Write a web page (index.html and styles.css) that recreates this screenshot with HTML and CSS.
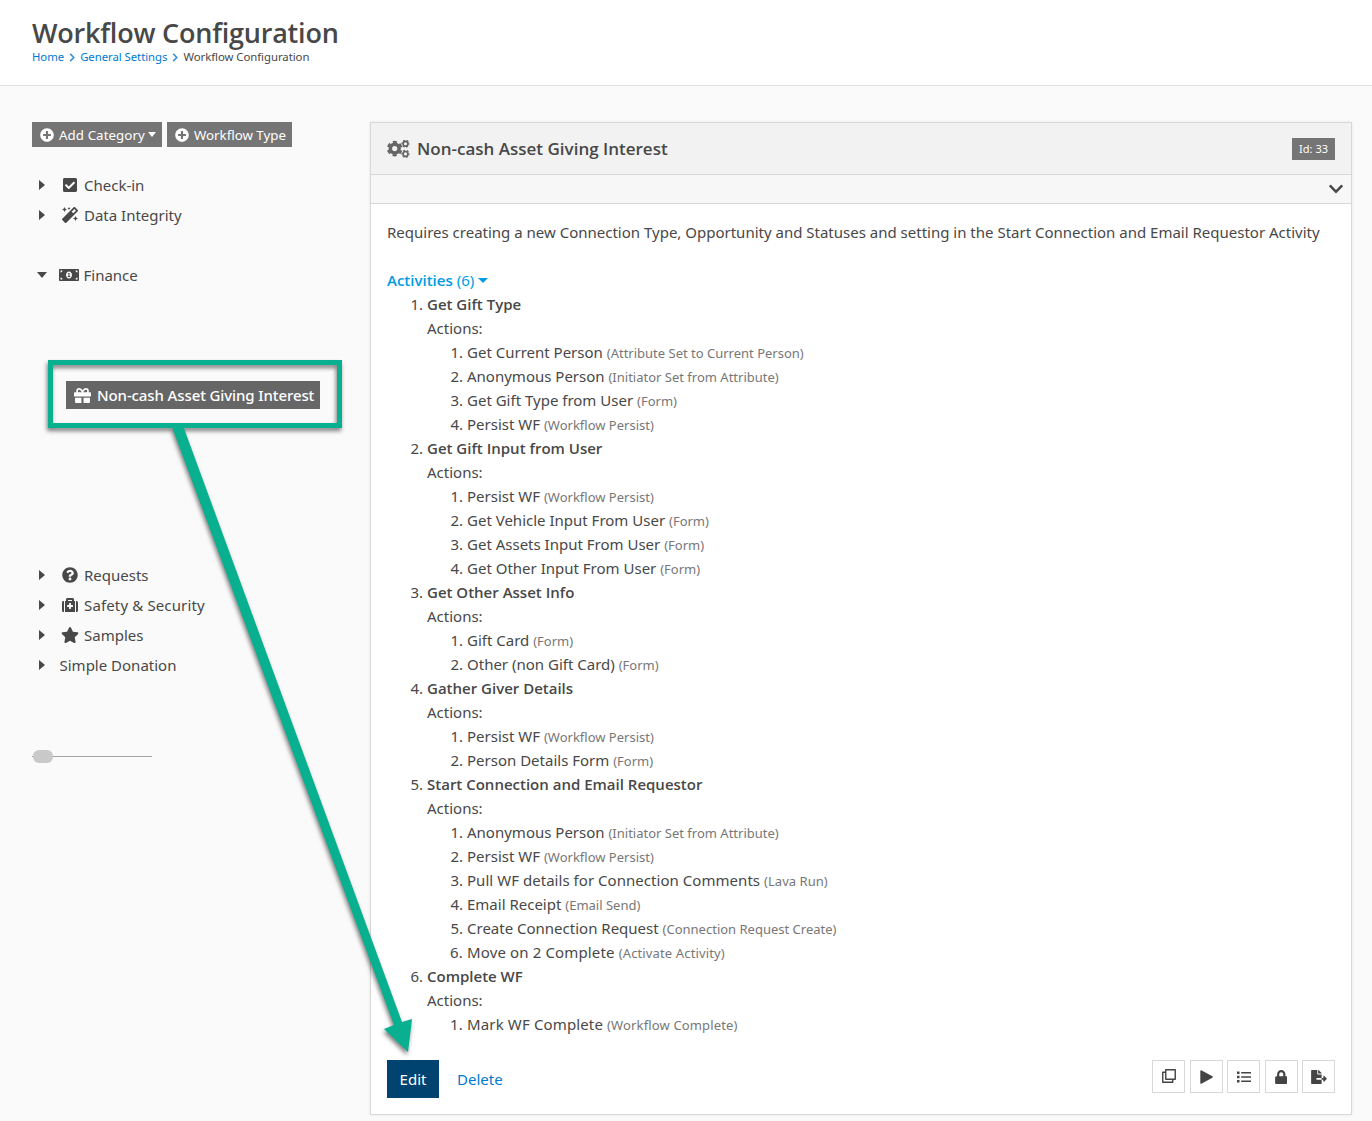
FILE: index.html
```html
<!DOCTYPE html>
<html lang="en">
<head>
<meta charset="utf-8">
<title>Workflow Configuration</title>
<link rel="stylesheet" href="styles.css">
</head>
<body>
<header class="page-header">
  <h1>Workflow Configuration</h1>
  <nav class="breadcrumb">
    <a href="#">Home</a>
    <svg class="sep" viewBox="0 0 6 10"><path d="M1 1l4 4-4 4"/></svg>
    <a href="#">General Settings</a>
    <svg class="sep" viewBox="0 0 6 10"><path d="M1 1l4 4-4 4"/></svg>
    <span>Workflow Configuration</span>
  </nav>
</header>

<main class="content">
  <aside class="sidebar">
    <div class="toolbar">
      <button class="btn-tool"><svg class="icon-plus" viewBox="0 0 512 512"><path d="M256 8C119 8 8 119 8 256s111 248 248 248 248-111 248-248S393 8 256 8zm144 276c0 6.600-5.400 12-12 12h-92v92c0 6.600-5.400 12-12 12h-56c-6.600 0-12-5.400-12-12v-92h-92c-6.600 0-12-5.400-12-12v-56c0-6.600 5.400-12 12-12h92v-92c0-6.600 5.400-12 12-12h56c6.600 0 12 5.400 12 12v92h92c6.600 0 12 5.400 12 12v56z"/></svg><span class="cat">Add Category</span><i class="caret"></i></button>
      <button class="btn-tool"><svg class="icon-plus" viewBox="0 0 512 512"><path d="M256 8C119 8 8 119 8 256s111 248 248 248 248-111 248-248S393 8 256 8zm144 276c0 6.600-5.400 12-12 12h-92v92c0 6.600-5.400 12-12 12h-56c-6.600 0-12-5.400-12-12v-92h-92c-6.600 0-12-5.400-12-12v-56c0-6.600 5.400-12 12-12h92v-92c0-6.600 5.400-12 12-12h56c6.600 0 12 5.400 12 12v92h92c6.600 0 12 5.400 12 12v56z"/></svg><span>Workflow Type</span></button>
    </div>

    <ul class="tree">
      <li><i class="arrow"></i><span class="ico"><svg width="14" height="16" viewBox="0 0 448 512"><path d="M400 480H48c-26.510 0-48-21.490-48-48V80c0-26.510 21.490-48 48-48h352c26.510 0 48 21.490 48 48v352c0 26.510-21.490 48-48 48zm-204.686-98.059l184-184c6.248-6.248 6.248-16.379 0-22.627l-22.627-22.627c-6.248-6.248-16.379-6.249-22.628 0L184 302.745l-70.059-70.059c-6.248-6.248-16.379-6.248-22.628 0l-22.627 22.627c-6.248 6.248-6.248 16.379 0 22.627l104 104c6.249 6.250 16.379 6.250 22.628.001z"/></svg></span>Check-in</li>
      <li><i class="arrow"></i><span class="ico"><svg width="16" height="16" viewBox="0 0 512 512"><path d="M224 96l16-32 32-16-32-16-16-32-16 32-32 16 32 16 16 32zM80 160l26.660-53.330L160 80l-53.340-26.670L80 0 53.340 53.330 0 80l53.340 26.670L80 160zm352 128l-26.660 53.330L352 368l53.340 26.670L432 448l26.660-53.330L512 368l-53.340-26.670L432 288zm70.620-193.770L417.770 9.380C411.530 3.120 403.340 0 395.150 0c-8.190 0-16.380 3.120-22.630 9.380L9.380 372.520c-12.500 12.500-12.500 32.760 0 45.250l84.850 84.850c6.250 6.250 14.440 9.370 22.620 9.370 8.190 0 16.380-3.120 22.630-9.370l363.140-363.150c12.500-12.480 12.500-32.750 0-45.240zM359.450 203.460l-50.910-50.910 86.600-86.600 50.910 50.910-86.600 86.600z"/></svg></span>Data Integrity</li>
      <li class="open"><i class="arrow down"></i><span class="ico"><svg width="20" height="16" viewBox="0 0 640 512"><path d="M352 288h-16v-88c0-4.420-3.580-8-8-8h-13.580c-4.740 0-9.370 1.400-13.310 4.030l-15.330 10.220a7.994 7.994 0 0 0-2.220 11.090l8.880 13.310a7.994 7.994 0 0 0 11.090 2.220l.47-.31V288h-16c-4.420 0-8 3.580-8 8v16c0 4.420 3.580 8 8 8h64c4.420 0 8-3.580 8-8v-16c0-4.420-3.580-8-8-8zM608 64H32C14.330 64 0 78.330 0 96v320c0 17.670 14.330 32 32 32h576c17.670 0 32-14.330 32-32V96c0-17.670-14.330-32-32-32zM48 400v-64c35.350 0 64 28.650 64 64H48zm0-224v-64h64c0 35.350-28.650 64-64 64zm272 192c-53.020 0-96-50.150-96-112 0-61.860 42.980-112 96-112s96 50.130 96 112c0 61.870-43 112-96 112zm272 32h-64c0-35.350 28.650-64 64-64v64zm0-224c-35.350 0-64-28.650-64-64h64v64z"/></svg></span>Finance
      </li>
      <li class="selected-row"><span class="selected"><svg width="17" height="17" viewBox="0 0 512 512"><path d="M32 448c0 17.700 14.300 32 32 32h160V320H32v128zm256 32h160c17.700 0 32-14.300 32-32V320H288v160zm192-320h-42.100c6.200-12.100 10.100-25.500 10.100-40 0-48.500-39.500-88-88-88-41.600 0-68.500 21.300-103 68.300-34.500-47-61.400-68.300-103-68.300-48.500 0-88 39.500-88 88 0 14.500 3.800 27.900 10.100 40H32c-17.700 0-32 14.300-32 32v80c0 8.800 7.200 16 16 16h480c8.800 0 16-7.200 16-16v-80c0-17.700-14.300-32-32-32zm-326.100 0c-22.100 0-40-17.900-40-40s17.900-40 40-40c19.900 0 34.600 3.300 86.100 80h-86.100zm206.100 0h-86.100c51.400-76.500 65.700-80 86.100-80 22.100 0 40 17.900 40 40s-17.900 40-40 40z"/></svg>Non-cash Asset Giving Interest</span></li>
      <li><i class="arrow"></i><span class="ico"><svg width="16" height="16" viewBox="0 0 512 512"><path d="M504 256c0 136.997-111.043 248-248 248S8 392.997 8 256C8 119.083 119.043 8 256 8s248 111.083 248 248zM262.655 90c-54.497 0-89.255 22.957-116.549 63.758-3.536 5.286-2.353 12.415 2.715 16.258l34.699 26.310c5.205 3.947 12.621 3.008 16.665-2.122 17.864-22.658 30.113-35.797 57.303-35.797 20.429 0 45.698 13.148 45.698 32.958 0 14.976-12.363 22.667-32.534 33.976C247.128 238.528 216 254.941 216 296v4c0 6.627 5.373 12 12 12h56c6.627 0 12-5.373 12-12v-1.333c0-28.462 83.186-29.647 83.186-106.667 0-58.002-60.165-102-116.531-102zM256 338c-25.365 0-46 20.635-46 46 0 25.364 20.635 46 46 46s46-20.636 46-46c0-25.365-20.635-46-46-46z"/></svg></span>Requests</li>
      <li class="wide"><i class="arrow"></i><span class="ico"><svg width="16" height="16" viewBox="0 0 512 512"><path d="M96 480h320V128h-32V80c0-26.510-21.490-48-48-48H176c-26.510 0-48 21.490-48 48v48H96v352zm96-384h128v32H192V96zm320 80v256c0 26.510-21.490 48-48 48h-16V128h16c26.510 0 48 21.490 48 48zM64 480H48c-26.510 0-48-21.490-48-48V176c0-26.510 21.490-48 48-48h16v352zm288-208v32c0 8.837-7.163 16-16 16h-48v48c0 8.837-7.163 16-16 16h-32c-8.837 0-16-7.163-16-16v-48h-48c-8.837 0-16-7.163-16-16v-32c0-8.837 7.163-16 16-16h48v-48c0-8.837 7.163-16 16-16h32c8.837 0 16 7.163 16 16v48h48c8.837 0 16 7.163 16 16z"/></svg></span>Safety &amp; Security</li>
      <li><i class="arrow"></i><span class="ico"><svg width="18" height="16" viewBox="0 0 576 512"><path d="M259.300 17.800L194 150.200 47.900 171.500c-26.200 3.800-36.700 36.100-17.700 54.600l105.700 103-25 145.500c-4.500 26.300 23.200 46 46.400 33.700L288 439.600l130.700 68.700c23.200 12.200 50.900-7.400 46.400-33.700l-25-145.500 105.700-103c19-18.500 8.500-50.800-17.700-54.600L382 150.200 316.700 17.800c-11.700-23.600-45.600-23.900-57.400 0z"/></svg></span>Samples</li>
      <li><i class="arrow"></i>Simple Donation</li>
    </ul>

    <div class="slider"><span class="thumb"></span></div>
  </aside>

  <section class="panel">
    <div class="panel-heading">
      <svg class="cogs" width="23" height="18" viewBox="0 0 23 18">
        <circle cx="7.700" cy="8.600" r="4.400" stroke-width="3.600"/>
        <circle cx="7.700" cy="8.600" r="6.700" stroke-width="2.200" stroke-dasharray="4 3.016" stroke-dashoffset="2" transform="rotate(30 7.700 8.600)"/>
        <circle cx="18.500" cy="3.700" r="2.400" stroke-width="1.700"/>
        <circle cx="18.500" cy="3.700" r="3.500" stroke-width="1.200" stroke-dasharray="1.960 1.705" stroke-dashoffset=".98"/>
        <circle cx="18.500" cy="13.900" r="2.400" stroke-width="1.700"/>
        <circle cx="18.500" cy="13.900" r="3.500" stroke-width="1.200" stroke-dasharray="1.960 1.705" stroke-dashoffset=".98"/>
      </svg>
      <h2>Non-cash Asset Giving Interest</h2>
      <span class="label">Id: 33</span>
    </div>
    <div class="panel-drawer"><svg width="14" height="16" viewBox="0 0 448 512"><path d="M207.029 381.476L12.686 187.132c-9.373-9.373-9.373-24.569 0-33.941l22.667-22.667c9.357-9.357 24.522-9.375 33.901-.04L224 284.505l154.745-154.021c9.379-9.335 24.544-9.317 33.901.04l22.667 22.667c9.373 9.373 9.373 24.569 0 33.941L240.971 381.476c-9.373 9.372-24.569 9.372-33.942 0z"/></svg></div>
    <div class="panel-body">
      <p class="description">Requires creating a new Connection Type, Opportunity and Statuses and setting in the Start Connection and Email Requestor Activity</p>
      <div class="activities-title"><strong>Activities</strong> (6)<i class="caret"></i></div>
      <ol class="activities">
        <li><strong>Get Gift Type</strong><div>Actions:</div>
          <ol>
            <li>Get Current Person <small>(Attribute Set to Current Person)</small></li>
            <li>Anonymous Person <small>(Initiator Set from Attribute)</small></li>
            <li>Get Gift Type from User <small>(Form)</small></li>
            <li>Persist WF <small>(Workflow Persist)</small></li>
          </ol></li>
        <li><strong>Get Gift Input from User</strong><div>Actions:</div>
          <ol>
            <li>Persist WF <small>(Workflow Persist)</small></li>
            <li>Get Vehicle Input From User <small>(Form)</small></li>
            <li>Get Assets Input From User <small>(Form)</small></li>
            <li>Get Other Input From User <small>(Form)</small></li>
          </ol></li>
        <li><strong>Get Other Asset Info</strong><div>Actions:</div>
          <ol>
            <li>Gift Card <small>(Form)</small></li>
            <li>Other (non Gift Card) <small>(Form)</small></li>
          </ol></li>
        <li><strong>Gather Giver Details</strong><div>Actions:</div>
          <ol>
            <li>Persist WF <small>(Workflow Persist)</small></li>
            <li>Person Details Form <small>(Form)</small></li>
          </ol></li>
        <li><strong>Start Connection and Email Requestor</strong><div>Actions:</div>
          <ol>
            <li>Anonymous Person <small>(Initiator Set from Attribute)</small></li>
            <li>Persist WF <small>(Workflow Persist)</small></li>
            <li class="roomy">Pull WF details for Connection Comments <small>(Lava Run)</small></li>
            <li>Email Receipt <small>(Email Send)</small></li>
            <li>Create Connection Request <small>(Connection Request Create)</small></li>
            <li class="roomier">Move on 2 Complete <small>(Activate Activity)</small></li>
          </ol></li>
        <li><strong>Complete WF</strong><div>Actions:</div>
          <ol>
            <li class="roomier">Mark WF Complete <small>(Workflow Complete)</small></li>
          </ol></li>
      </ol>
      <div class="actions">
        <button class="btn-primary">Edit</button>
        <a class="btn-link" href="#">Delete</a>
        <div class="icon-buttons">
          <button><svg class="clone" width="14" height="14" viewBox="0 0 14 14"><path class="line" d="M3.750.75h9.500v9.500h-9.500zM3.500 3.250H.75v10h10V10.500"/></svg></button>
          <button><svg width="13" height="14" viewBox="0 0 13 14"><path d="M.3 1.100C.3.200 1 0 1.700.4l10.700 5.900c.6.400.6 1 0 1.400L1.700 13.600c-.7.400-1.400.2-1.400-.7z"/></svg></button>
          <button><svg width="14" height="12" viewBox="0 0 14 12"><path d="M0 .5h2.500V3H0zM0 4.700h2.500v2.500H0zM0 9h2.500v2.500H0zM4.200 1h9.800v1.500H4.200zM4.200 5.200h9.800v1.500H4.200zM4.200 9.500h9.800V11H4.200z"/></svg></button>
          <button><svg width="12.500" height="14" viewBox="0 0 448 512"><path d="M400 224h-24v-72C376 68.200 307.800 0 224 0S72 68.200 72 152v72H48c-26.500 0-48 21.500-48 48v192c0 26.500 21.500 48 48 48h352c26.500 0 48-21.500 48-48V272c0-26.500-21.500-48-48-48zm-104 0H152v-72c0-39.700 32.300-72 72-72s72 32.300 72 72v72z"/></svg></button>
          <button><svg width="16" height="14" viewBox="0 0 576 512"><path d="M384 121.900c0-6.300-2.500-12.400-7-16.900L279.100 7c-4.500-4.500-10.600-7-17-7H256v128h128zM571 308l-95.700-96.400c-10.100-10.100-27.400-3-27.400 11.300V288h-64v64h64v65.200c0 14.300 17.300 21.400 27.400 11.300L571 332c6.600-6.600 6.600-17.400 0-24zm-379 28v-32c0-8.800 7.200-16 16-16h176V160H248c-13.200 0-24-10.800-24-24V0H24C10.700 0 0 10.700 0 24v464c0 13.300 10.700 24 24 24h336c13.300 0 24-10.700 24-24V352H208c-8.800 0-16-7.200-16-16z"/></svg></button>
        </div>
      </div>
    </div>
  </section>
</main>

<svg class="callout" width="1372" height="1121" viewBox="0 0 1372 1121">
  <rect x="50.500" y="362.500" width="289" height="63"/>
  <path d="M172 427h11.500L402 1022l10-3-4 33-24-23 10-4z"/>
</svg>
</body>
</html>
```
FILE: styles.css
```css
* { box-sizing: border-box; }

body {
  margin: 0;
  min-height: 1121px;
  position: relative;
  background: #fafafa;
  color: #484848;
  font: 15px/24px "Noto Sans", "Open Sans", sans-serif;
}

a { color: #0079d0; text-decoration: none; }
svg { fill: currentColor; display: block; flex: none; }
button { font: inherit; margin: 0; border: 0; border-radius: 0; }
strong, h1, h2 { font-family: "Open Sans", "Noto Sans", sans-serif; font-weight: 600; }

.page-header {
  height: 86px;
  padding: 18px 32px 0;
  background: #fff;
  border-bottom: 1px solid #dfe0e1;
}
.page-header h1 { margin: 0; font-size: 27px; line-height: 30px; letter-spacing: -.21px; }

.breadcrumb { display: flex; align-items: center; font-size: 11.350px; line-height: 18px; letter-spacing: -.04px; }
.breadcrumb .sep {
  width: 6px; height: 9px; margin: 1px 5px 0;
  fill: none; stroke: #3a8fd6; stroke-width: 1.700;
}

.content { display: flex; gap: 18px; padding: 36px 20px 0 32px; }

.sidebar { width: 320px; }
.toolbar { display: flex; gap: 5px; }
.btn-tool {
  display: flex; align-items: center;
  height: 25px; padding: 0 6px 0 8px;
  background: #757575; color: #fff;
  font-size: 13.300px; line-height: 26px; white-space: nowrap;
}
.btn-tool .cat { letter-spacing: .08px; }
.icon-plus { width: 14px; height: 14px; margin-right: 5px; }
.caret { border: 5px solid transparent; border-top: 5.500px solid currentColor; border-bottom: 0; }
.btn-tool .caret { border-width: 5px 4.500px 0; margin-left: 3px; }

.tree { list-style: none; margin: 23px 0 0; padding: 0; }
.tree li { display: flex; align-items: center; height: 30px; padding-left: 7px; line-height: 30px; }
.tree .arrow {
  width: 6px; margin-right: 14.500px;
  border: 5px solid transparent; border-left: 6px solid #484848; border-right: 0;
}
.tree .arrow.down {
  width: 10px; margin: 0 12px 0 -2px;
  border: 5px solid transparent; border-top: 6px solid #484848; border-bottom: 0;
}
.tree .ico { display: flex; justify-content: center; width: 20px; margin-right: 4.500px; }
.tree .open { margin-top: 30px; }
.tree .wide { letter-spacing: .14px; }
.tree .selected-row { margin: 90px 0 150px; padding-left: 34px; }
.selected {
  display: flex; align-items: center; gap: 6px;
  width: 254px; height: 28px; padding-left: 8px;
  background: #666; color: #fff;
  font-weight: 500; letter-spacing: -.11px; white-space: nowrap;
}

.slider { display: flex; align-items: center; height: 14px; margin-top: 69px; width: 120px;
  background: linear-gradient(#a3a3a3, #a3a3a3) 0 7px / 100% 1px no-repeat; }
.thumb { width: 20px; height: 13px; margin-left: 1px; border-radius: 6px; background: #c9c9c9; }

.panel {
  width: 982px; height: 993px;
  background: #fff;
  border: 1px solid #d8d8d8;
  box-shadow: 0 0 3px rgba(0, 0, 0, .08);
}
.panel-heading {
  display: flex; align-items: center;
  height: 52px; padding: 0 16px;
  background: #f2f2f2; border-bottom: 1px solid #d8d8d8;
}
.cogs { fill: none; stroke: #666; margin-right: 7px; }
.panel-heading h2 { margin: 0; font-size: 17px; line-height: 24px; }
.label {
  margin-left: auto; height: 22px; padding: 0 7px;
  background: #757575; color: #fff; font-size: 11px; line-height: 21px;
}
.panel-drawer {
  display: flex; align-items: center; justify-content: flex-end;
  height: 29px; padding-right: 8px;
  background: #f7f7f7; border-bottom: 1px solid #d8d8d8;
}
.panel-body { padding: 16px; }
.description { margin: 0 0 24px; white-space: nowrap; }
.activities-title { display: flex; align-items: center; gap: 4px; color: #009ce3; }

ol { margin: 0; padding-left: 40px; }
small { font-size: 13px; line-height: 1; color: #777; }
.roomy { letter-spacing: .04px; }
.roomier { letter-spacing: .14px; }

.actions { display: flex; align-items: flex-start; margin-top: 24px; }
.btn-primary { width: 52px; height: 38px; padding: 0; background: #004371; color: #fff; }
.btn-link { margin-left: 18px; line-height: 38px; }
.icon-buttons { display: flex; gap: 4.500px; margin-left: auto; }
.icon-buttons button {
  display: flex; align-items: center; justify-content: center;
  width: 33px; height: 33px; padding: 0;
  background: #fff; border: 1px solid #d8d8d8; color: #444;
}
.icon-buttons .clone { margin-bottom: 2px; }
.icon-buttons .line { fill: none; stroke: #444; stroke-width: 1.400; stroke-linejoin: round; }

/* annotation drawn over the page */
.callout {
  position: absolute; left: 0; top: 0; pointer-events: none;
  filter: drop-shadow(-1px 3px 2px rgba(0, 0, 0, .5));
}
.callout rect { fill: none; stroke: #08b08f; stroke-width: 5; }
.callout path { fill: #08b08f; }
```
